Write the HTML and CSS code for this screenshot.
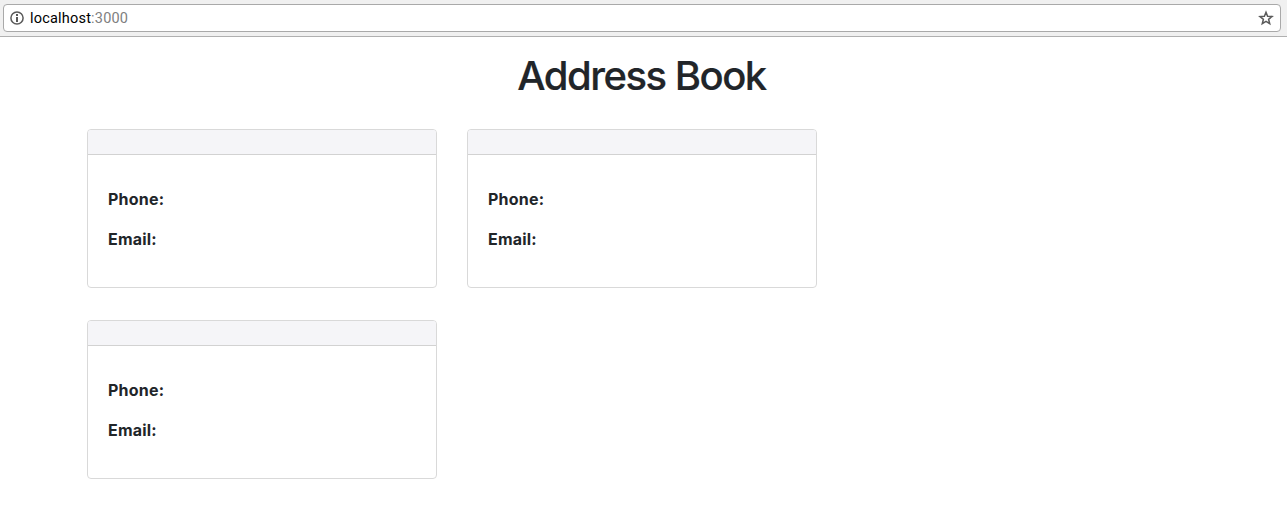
FILE: index.html
```html
<!DOCTYPE html>
<html lang="en">
<head>
<meta charset="utf-8">
<title>Address Book</title>
<link rel="stylesheet" href="styles.css">
</head>
<body>
<header class="toolbar">
  <div class="address-bar">
    <svg class="info-icon" width="14" height="14" viewBox="0 0 14 14" aria-hidden="true">
      <circle cx="7" cy="7" r="6.1" fill="none" stroke="#5a5a5a" stroke-width="1.5"/>
      <path d="M6 3h2v2H6zM6 6h2v5H6z" fill="#5a5a5a"/>
    </svg>
    <span class="url">localhost<span class="port">:3000</span></span>
    <svg class="star-icon" width="16" height="16" viewBox="0 0 16 16" aria-hidden="true">
      <path d="M8 2.2l1.6 4 4.4.3-3.4 2.8 1.1 4.4L8 11.4l-3.7 2.3 1.1-4.4L2 6.5l4.4-.3z" fill="none" stroke="#5a5a5a" stroke-width="1.5"/>
    </svg>
  </div>
</header>
<main class="container">
  <h1 class="title">Address Book</h1>
  <div class="cards">
    <section class="card">
      <div class="card-header"></div>
      <div class="card-body"><p class="field">Phone:</p><p class="field">Email:</p></div>
    </section>
    <section class="card">
      <div class="card-header"></div>
      <div class="card-body"><p class="field">Phone:</p><p class="field">Email:</p></div>
    </section>
    <section class="card">
      <div class="card-header"></div>
      <div class="card-body"><p class="field">Phone:</p><p class="field">Email:</p></div>
    </section>
  </div>
</main>
</body>
</html>
```
FILE: styles.css
```css
* { box-sizing: border-box; }
body {
  margin: 0;
  background: #fff;
  color: #212529;
  font-family: Inter, sans-serif;
}
.toolbar {
  height: 37px;
  padding: 4px 6px 4px 3px;
  background: #f0f0f0;
  border-bottom: 1px solid #b0b0b0;
}
.address-bar {
  display: flex;
  align-items: center;
  height: 28px;
  padding: 0 6px;
  background: #fff;
  border: 1px solid #a9a9a9;
  border-radius: 4px;
}
.url {
  flex: 1;
  margin-left: 6px;
  padding-top: 2px;
  color: #000;
  font: 14.5px/20px Roboto, sans-serif;
  letter-spacing: 0.2px;
}
.port { color: #808080; }
.container {
  width: 1110px;
  margin-left: 87px;
  padding-top: 15px;
}
.title {
  margin: 0;
  padding-right: 1px;
  font-size: 40px;
  font-weight: 500;
  line-height: 48px;
  letter-spacing: -1.5px;
  text-align: center;
  -webkit-text-stroke: 0.2px #212529;
}
.cards {
  display: grid;
  grid-template-columns: repeat(2, 350px);
  gap: 32px 30px;
  margin-top: 29px;
}
.card {
  height: 159px;
  border: 1px solid #d9d9d9;
  border-radius: 4px;
  overflow: hidden;
}
.card-header {
  height: 25px;
  background: #f5f5f8;
  border-bottom: 1px solid #d2d2d2;
}
.card-body { padding: 32px 20px; }
.field {
  margin: 0 0 16px;
  font-size: 16px;
  font-weight: 700;
  line-height: 24px;
  letter-spacing: 0.2px;
}
```
